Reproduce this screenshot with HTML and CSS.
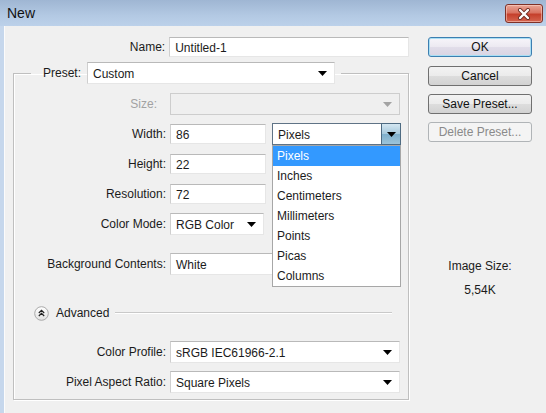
FILE: index.html
```html
<!DOCTYPE html>
<html lang="en">
  <head>
    <meta charset="UTF-8">
    <title>New</title>
    <link rel="stylesheet" href="styles.css">
  </head>
  <body>
    <div class="window">
      <!-- title bar -->
      <div class="titlebar">
        <span class="title">New</span>
        <div class="close">
          <svg width="16" height="12" viewBox="0 0 16 12">
            <path d="M4 2l8 8M12 2l-8 8" stroke="#6b2a20" stroke-width="4" stroke-linecap="round"/>
            <path d="M4 2l8 8M12 2l-8 8" stroke="#fff" stroke-width="2.4" stroke-linecap="round"/>
          </svg>
        </div>
      </div>

      <div class="dialog">
        <!-- left: the form -->
        <div class="form">
          <div class="row name-row">
            <span class="lbl">Name:</span>
            <div class="field name-field">Untitled-1</div>
          </div>

          <fieldset class="group">
            <legend class="preset">
              <span class="lbl-plain">Preset:</span>
              <div class="field drop preset-drop">Custom
                <svg class="arr" width="9" height="5"><path d="M0 0h9L4.5 5z"/></svg>
              </div>
            </legend>

            <div class="row">
              <span class="lbl off size-lbl">Size:</span>
              <div class="field drop off-drop size-drop">
                <svg class="arr" width="9" height="5"><path d="M0 0h9L4.5 5z" fill="#a3a3a3"/></svg>
              </div>
            </div>

            <div class="row">
              <span class="lbl">Width:</span>
              <div class="field num">86</div>
              <div class="units">
                <div class="field drop open-drop">Pixels
                  <div class="arrbtn"><svg width="9" height="5"><path d="M0 0h9L4.5 5z"/></svg></div>
                </div>
                <ul class="list">
                  <li class="sel">Pixels</li>
                  <li>Inches</li>
                  <li>Centimeters</li>
                  <li>Millimeters</li>
                  <li>Points</li>
                  <li>Picas</li>
                  <li>Columns</li>
                </ul>
              </div>
            </div>

            <div class="row">
              <span class="lbl">Height:</span>
              <div class="field num">22</div>
            </div>

            <div class="row">
              <span class="lbl">Resolution:</span>
              <div class="field num">72</div>
            </div>

            <div class="row">
              <span class="lbl">Color Mode:</span>
              <div class="field drop mode-drop">RGB Color
                <svg class="arr" width="9" height="5"><path d="M0 0h9L4.5 5z"/></svg>
              </div>
            </div>

            <div class="row bg-row">
              <span class="lbl">Background Contents:</span>
              <div class="field drop bg-drop">White</div>
            </div>

            <div class="advanced">
              <svg width="15" height="15" viewBox="0 0 15 15">
                <defs>
                  <linearGradient id="g" x1="0" y1="0" x2="0" y2="1">
                    <stop offset="0" stop-color="#ffffff"/>
                    <stop offset="1" stop-color="#e2e2e2"/>
                  </linearGradient>
                </defs>
                <circle cx="7.5" cy="7.5" r="6.8" fill="url(#g)" stroke="#a9a9a9"/>
                <path d="M4.8 7l2.7-2.6L10.2 7M4.8 10l2.7-2.6L10.2 10" fill="none" stroke="#222" stroke-width="1.2"/>
              </svg>
              <span>Advanced</span>
              <div class="rule"></div>
            </div>

            <div class="row">
              <span class="lbl">Color Profile:</span>
              <div class="field drop long-drop">sRGB IEC61966-2.1
                <svg class="arr" width="9" height="5"><path d="M0 0h9L4.5 5z"/></svg>
              </div>
            </div>

            <div class="row">
              <span class="lbl">Pixel Aspect Ratio:</span>
              <div class="field drop long-drop">Square Pixels
                <svg class="arr" width="9" height="5"><path d="M0 0h9L4.5 5z"/></svg>
              </div>
            </div>
          </fieldset>
        </div>

        <!-- right: buttons -->
        <div class="side">
          <div class="btn default">OK</div>
          <div class="btn">Cancel</div>
          <div class="btn">Save Preset...</div>
          <div class="btn disabled">Delete Preset...</div>
          <div class="imgsize">Image Size:</div>
          <div class="imgval">5,54K</div>
        </div>
      </div>
    </div>
  </body>
</html>
```

FILE: styles.css
```css
* {
  margin: 0;
  padding: 0;
  box-sizing: border-box;
}

body {
  width: 546px;
  height: 413px;
  overflow: hidden;
  background: #f0f0f0;
  font-family: "Liberation Sans", Arial, sans-serif;
  font-size: 12px;
  color: #1b1b1b;
}

.window {
  height: 413px;
  display: flex;
  flex-direction: column;
}

.titlebar {
  height: 26px;
  display: flex;
  align-items: center;
  justify-content: space-between;
  padding: 0 3px 0 7px;
  background: linear-gradient(#9fb6d3, #b3c9e3 60%, #bcd1ea);
}

.title {
  font-size: 14px;
  color: #111;
}

.close {
  width: 38px;
  height: 19px;
  margin-top: 1px;
  border: 1px solid #7f3127;
  border-radius: 3px;
  background: linear-gradient(#e9a596, #d97462 45%, #c5402c 55%, #d5654f);
  display: flex;
  align-items: center;
  justify-content: center;
  box-shadow: inset 0 0 0 1px rgba(255, 220, 210, 0.5);
}

.dialog {
  flex: 1;
  display: flex;
  border-left: 4px solid #c6d7ec;
  box-shadow: inset 1px 0 #fbfbfb;
}

.form {
  width: 405px;
  padding: 11px 0 0 9px;
}

.row {
  display: flex;
  align-items: center;
  height: 22px;
  margin-bottom: 8px;
}

.lbl {
  width: 152px;
  text-align: right;
  margin-right: 4px;
}

.name-row {
  height: 20px;
  margin-bottom: 5px;
}

.name-row .lbl {
  width: 153px;
}

.off {
  color: #a2a2a2;
}

.size-lbl {
  padding-right: 9px;
}

.field {
  height: 20px;
  background: #fff;
  border: 1px solid #e6e6e6;
  border-top-color: #b9b9b9;
  border-left-color: #cfcfcf;
  padding: 2px 5px 0 5px;
  line-height: 16px;
  white-space: nowrap;
}

.name-field {
  width: 241px;
}

.num {
  width: 96px;
}

.drop {
  height: 22px;
  padding-top: 3px;
  position: relative;
}

.arr {
  position: absolute;
  right: 7px;
  top: 8px;
}

.group {
  width: 396px;
  border: 1px solid #bfbfbf;
  box-shadow: inset 1px 1px #fff, 1px 1px #fff;
  padding: 9px 0 6px 0;
}

.preset {
  display: flex;
  align-items: center;
  margin-left: 17px;
  padding: 0 6px 0 12px;
}

.lbl-plain {
  margin-right: 6px;
}

.preset-drop {
  width: 248px;
}

.off-drop {
  width: 230px;
  background: #efefef;
  border-color: #cdcdcd;
}

.units {
  position: relative;
  margin-left: 6px;
}

.open-drop {
  width: 129px;
  border: 1px solid #5f7386;
}

.arrbtn {
  position: absolute;
  right: -1px;
  top: -1px;
  width: 20px;
  height: 22px;
  border: 1px solid #4e6b82;
  background: linear-gradient(#d4e7f2, #a5c8dc 50%, #7fafcb 52%, #9cc4da);
  display: flex;
  align-items: center;
  justify-content: center;
}

.list {
  position: absolute;
  left: 0;
  top: 22px;
  width: 129px;
  list-style: none;
  background: #fff;
  border: 1px solid #a7a7a7;
  z-index: 5;
}

.list li {
  height: 20px;
  line-height: 20px;
  padding-left: 4px;
}

.list .sel {
  background: #3399ff;
  color: #fff;
}

.mode-drop {
  width: 94px;
}

.bg-row {
  margin-top: 18px;
}

.bg-drop {
  width: 150px;
}

.advanced {
  display: flex;
  align-items: center;
  height: 22px;
  margin: 27px 0 17px 20px;
}

.advanced span {
  margin-left: 7px;
}

.rule {
  width: 277px;
  margin-left: 6px;
  border-top: 1px solid #c9c9c9;
  border-bottom: 1px solid #fff;
}

.group .row:last-child {
  margin-bottom: 0;
}

.long-drop {
  width: 230px;
}

.side {
  width: 104px;
  margin-left: 19px;
  padding-top: 11px;
  display: flex;
  flex-direction: column;
}

.btn {
  height: 20px;
  margin-bottom: 8px;
  border: 1px solid #707070;
  border-radius: 3px;
  background: linear-gradient(#f3f3f3, #ebebeb 50%, #dddddd 51%, #d2d2d2);
  text-align: center;
  line-height: 18px;
  color: #111;
}

.btn.default {
  border-color: #3c7fb1;
  background: linear-gradient(#f7f5fa, #ece9f1 50%, #e1dde9 51%, #d9d4e3);
  box-shadow: inset 0 0 0 1px #a9dff4;
  margin-bottom: 9px;
}

.btn.disabled {
  border-color: #b0b4b7;
  background: #f4f4f4;
  color: #8a8a8a;
}

.imgsize {
  margin-top: 109px;
  text-align: center;
}

.imgval {
  margin-top: 10px;
  text-align: center;
}
```
